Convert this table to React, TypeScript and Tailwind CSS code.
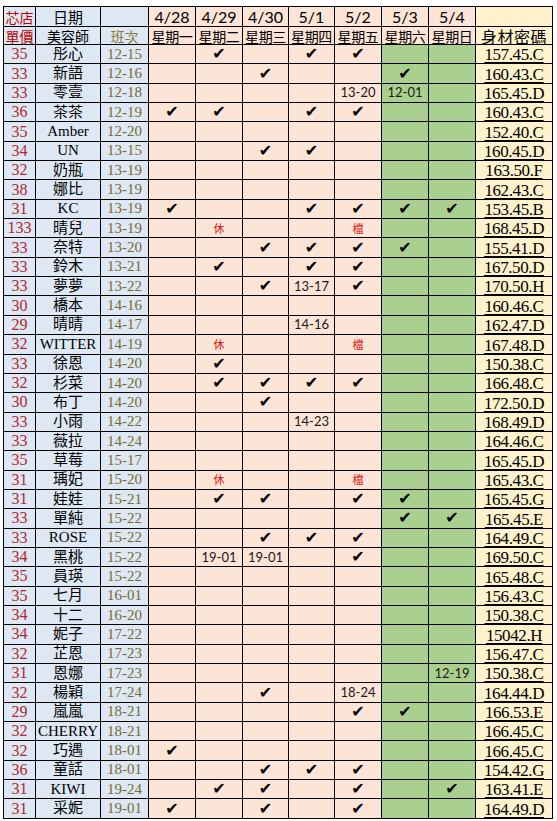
import React from "react";

type Row = [string, string, string, string[], string];

const C = "✔";
const rows: Row[] = [
  ["35", "彤心", "12-15", ["", C, "", C, C, "", ""], "157.45.C"],
  ["33", "新語", "12-16", ["", "", C, "", "", C, ""], "160.43.C"],
  ["33", "零壹", "12-18", ["", "", "", "", "13-20", "12-01", ""], "165.45.D"],
  ["36", "茶茶", "12-19", [C, C, "", C, C, "", ""], "160.43.C"],
  ["35", "Amber", "12-20", ["", "", "", "", "", "", ""], "152.40.C"],
  ["34", "UN", "13-15", ["", "", C, C, "", "", ""], "160.45.D"],
  ["32", "奶瓶", "13-19", ["", "", "", "", "", "", ""], "163.50.F"],
  ["38", "娜比", "13-19", ["", "", "", "", "", "", ""], "162.43.C"],
  ["31", "KC", "13-19", [C, "", "", C, C, C, C], "153.45.B"],
  ["133", "晴兒", "13-19", ["", "休", "", "", "檔", "", ""], "168.45.D"],
  ["33", "奈特", "13-20", ["", "", C, C, C, C, ""], "155.41.D"],
  ["33", "鈴木", "13-21", ["", C, "", C, C, "", ""], "167.50.D"],
  ["33", "夢夢", "13-22", ["", "", C, "13-17", C, "", ""], "170.50.H"],
  ["30", "橋本", "14-16", ["", "", "", "", "", "", ""], "160.46.C"],
  ["29", "晴晴", "14-17", ["", "", "", "14-16", "", "", ""], "162.47.D"],
  ["32", "WITTER", "14-19", ["", "休", "", "", "檔", "", ""], "167.48.D"],
  ["33", "徐恩", "14-20", ["", C, "", "", "", "", ""], "150.38.C"],
  ["32", "杉菜", "14-20", ["", C, C, C, C, "", ""], "166.48.C"],
  ["30", "布丁", "14-20", ["", "", C, "", "", "", ""], "172.50.D"],
  ["33", "小雨", "14-22", ["", "", "", "14-23", "", "", ""], "168.49.D"],
  ["33", "薇拉", "14-24", ["", "", "", "", "", "", ""], "164.46.C"],
  ["35", "草莓", "15-17", ["", "", "", "", "", "", ""], "165.45.D"],
  ["31", "瑀妃", "15-20", ["", "休", "", "", "檔", "", ""], "165.43.C"],
  ["31", "娃娃", "15-21", ["", C, C, "", C, C, ""], "165.45.G"],
  ["33", "單純", "15-22", ["", "", "", "", "", C, C], "165.45.E"],
  ["33", "ROSE", "15-22", ["", "", C, C, C, "", ""], "164.49.C"],
  ["34", "黑桃", "15-22", ["", "19-01", "19-01", "", C, "", ""], "169.50.C"],
  ["35", "員瑛", "15-22", ["", "", "", "", "", "", ""], "165.48.C"],
  ["35", "七月", "16-01", ["", "", "", "", "", "", ""], "156.43.C"],
  ["34", "十二", "16-20", ["", "", "", "", "", "", ""], "150.38.C"],
  ["34", "妮子", "17-22", ["", "", "", "", "", "", ""], "15042.H"],
  ["32", "芷恩", "17-23", ["", "", "", "", "", "", ""], "156.47.C"],
  ["31", "恩娜", "17-23", ["", "", "", "", "", "", "12-19"], "150.38.C"],
  ["32", "楊穎", "17-24", ["", "", C, "", "18-24", "", ""], "164.44.D"],
  ["29", "嵐嵐", "18-21", ["", "", "", "", C, C, ""], "166.53.E"],
  ["32", "CHERRY", "18-21", ["", "", "", "", "", "", ""], "166.45.C"],
  ["32", "巧遇", "18-01", [C, "", "", "", "", "", ""], "166.45.C"],
  ["36", "童話", "18-01", ["", "", C, C, C, "", ""], "154.42.G"],
  ["31", "KIWI", "19-24", ["", C, C, "", C, "", C], "163.41.E"],
  ["31", "采妮", "19-01", [C, "", C, "", C, "", ""], "164.49.D"],
];

const dates = ["4/28", "4/29", "4/30", "5/1", "5/2", "5/3", "5/4"];
const days = ["星期一", "星期二", "星期三", "星期四", "星期五", "星期六", "星期日"];

const serif = "font-['Liberation_Serif','Noto_Sans_CJK_TC',serif]";
const cjk = "font-['Noto_Sans_CJK_TC',sans-serif]";
const sans = "font-['Lato','Noto_Sans_CJK_TC',sans-serif]";

const cell = "flex items-center justify-center overflow-hidden leading-none whitespace-nowrap";

function DayCell({ v, weekend }: { v: string; weekend: boolean }) {
  const bg = weekend ? "bg-[#a9d08e]" : "bg-[#fce4d6]";
  let content: React.ReactNode = null;
  if (v === C) {
    content = <span className="font-['DejaVu_Sans',sans-serif] text-[16px] leading-none text-black">✔</span>;
  } else if (v === "休" || v === "檔") {
    content = <span className={`${cjk} text-[11px] leading-none text-[#e01010]`}>{v}</span>;
  } else if (v) {
    content = <span className={`${sans} text-[13px] leading-none text-[#1a1a1a]`}>{v}</span>;
  }
  return <div className={`${cell} ${bg}`}>{content}</div>;
}

export default function App() {
  return (
    <div className="bg-white w-[557px] h-[821px] overflow-hidden pl-[3px] pt-[6px]">
      <div className="grid w-[550px] gap-[1px] bg-black p-[1px] grid-cols-[31px_64px_47px_46px_46px_45px_45px_46px_46px_46px_76px] grid-rows-[19px_17px_repeat(40,18.35px)]">
        {/* header row 1 */}
        <div className={`${cell} bg-[#dde8f4] ${cjk} text-[14px] text-[#c00000]`}>芯店</div>
        <div className={`${cell} bg-[#dde8f4] ${cjk} text-[15px] text-black`}>日期</div>
        <div className="bg-[#dde8f4]"></div>
        {dates.map((d) => (
          <div key={d} className={`${cell} bg-[#fce4d6] ${sans} text-[16px] text-black`}>{d}</div>
        ))}
        <div className="bg-[#fff2cc]"></div>

        {/* header row 2 */}
        <div className={`${cell} bg-[#dde8f4] ${cjk} text-[14px] text-[#c00000]`}>單價</div>
        <div className={`${cell} bg-[#dde8f4] ${cjk} text-[14px] text-black`}>美容師</div>
        <div className={`${cell} bg-[#dde8f4] ${cjk} text-[14px] text-[#8a7a3c]`}>班次</div>
        {days.map((d) => (
          <div key={d} className={`${cell} bg-[#fce4d6] ${cjk} text-[14px] tracking-[-0.3px] text-black`}>{d}</div>
        ))}
        <div className={`${cell} bg-[#fff2cc] ${cjk} text-[16px] tracking-[0.5px] text-black`}>身材密碼</div>

        {rows.map((r, i) => (
          <React.Fragment key={i}>
            <div className={`${cell} bg-[#dde8f4] ${serif} text-[16px] text-[#b3262b]`}>{r[0]}</div>
            <div className={`${cell} bg-[#dde8f4] ${serif} text-[15px] text-black`}>{r[1]}</div>
            <div className={`${cell} bg-[#dde8f4] ${serif} text-[15px] text-[#7b6a30]`}>{r[2]}</div>
            {r[3].map((v, j) => (
              <DayCell key={j} v={v} weekend={j >= 5} />
            ))}
            <div className={`flex items-end justify-center overflow-hidden whitespace-nowrap bg-[#fff2cc] ${serif} text-[17px] leading-[17px] tracking-[-0.4px] text-black`}>
              <span className="underline underline-offset-[2px]">{r[4]}</span>
            </div>
          </React.Fragment>
        ))}
      </div>
    </div>
  );
}
